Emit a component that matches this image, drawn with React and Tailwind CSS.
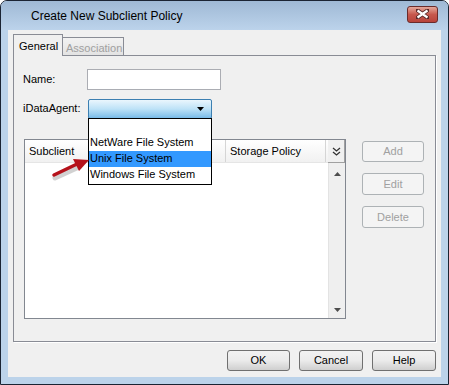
import React from 'react';

const FONT = { fontFamily: '"Liberation Sans", Arial, sans-serif' };

const WinButton = ({ label, disabled, className = '' }) => (
  <div
    className={`flex items-center justify-center rounded-[3px] border text-[11px] ${
      disabled
        ? 'border-[#adb2b5] bg-[#f4f4f4] text-[#a0a0a0]'
        : 'border-[#707070] bg-gradient-to-b from-[#f2f2f2] via-[#ebebeb] to-[#cfcfcf] text-black'
    } ${className}`}
  >
    {label}
  </div>
);

const TriUp = () => (
  <svg width="7" height="4" viewBox="0 0 7 4">
    <path d="M0 4 L3.5 0 L7 4 Z" fill="#4d4d4d" />
  </svg>
);

const TriDown = ({ color = '#4d4d4d' }) => (
  <svg width="7" height="4" viewBox="0 0 7 4">
    <path d="M0 0 L7 0 L3.5 4 Z" fill={color} />
  </svg>
);

const App = () => {
  return (
    <div
      className="relative flex h-[385px] w-[449px] flex-col overflow-hidden rounded-t-[7px] border border-[#1b2433] bg-[#bcd3ea]"
      style={FONT}
    >
      {/* Title bar */}
      <div className="flex h-[29px] shrink-0 items-center bg-gradient-to-b from-[#9fb9d5] to-[#bcd3eb] pl-[30px] pr-[10px]">
        <span className="flex-1 pt-px text-[12px] text-black">Create New Subclient Policy</span>
        <div className="mb-[3px] flex h-[17px] w-[31px] items-center justify-center rounded-[3px] border border-[#6a2b2b] bg-gradient-to-b from-[#e3a79b] via-[#c7584d] to-[#b8433b]">
          <svg width="13" height="10" viewBox="0 0 13 10">
            <path
              d="M1 1 L12 9 M12 1 L1 9"
              stroke="#5b2b2b"
              strokeWidth="4"
              strokeLinecap="square"
            />
            <path d="M1.5 1.5 L11.5 8.5 M11.5 1.5 L1.5 8.5" stroke="#ffffff" strokeWidth="2.2" />
          </svg>
        </div>
      </div>

      {/* Client area */}
      <div className="mx-[7px] flex h-[347px] flex-col bg-[#f0f0f0] px-[5px] pt-[4px]">
        {/* Tabs */}
        <div className="relative z-10 flex h-[22px] items-end">
          <div className="flex h-[22px] w-[50px] items-start border border-b-0 border-[#898c95] bg-[#f0f0f0] pl-[5px] pt-[3px] text-[11px] text-black">
            General
          </div>
          <div className="mb-px flex h-[18px] w-[61px] items-start border border-b-0 border-l-0 border-[#898c95] bg-gradient-to-b from-[#f2f2f2] to-[#e3e3e3] pl-[3px] pt-[2px] text-[11px] text-[#a0a0a0]">
            Association
          </div>
        </div>

        {/* Tab panel */}
        <div className="-mt-px h-[287px] w-[423px] border border-[#898c95] bg-[#f0f0f0] shadow-[1px_1px_0_#ffffff]">
          <div className="flex flex-col px-[9px] pt-[13px]">
            <div className="flex h-[20px] items-center">
              <span className="w-[64px] text-[11px] text-black">Name:</span>
              <div className="h-[21px] w-[134px] border border-[#abadb3] bg-white" />
            </div>

            <div className="mt-[10px] flex h-[19px] items-center">
              <span className="w-[65px] text-[11px] text-black">iDataAgent:</span>
              <div className="relative">
                <div className="flex h-[20px] w-[124px] items-center justify-end rounded-[2px] border border-[#3c7fb1] bg-gradient-to-b from-[#eaf6fd] via-[#bde2f7] to-[#79bbe8] pr-[7px]">
                  <TriDown color="#000000" />
                </div>
                {/* Open dropdown list */}
                <div className="absolute left-0 top-[19px] z-20 flex w-[124px] flex-col border border-black bg-white pb-px text-[11px] text-black">
                  <div className="h-[16px]" />
                  <div className="flex h-[16px] items-center pl-px">NetWare File System</div>
                  <div className="flex h-[16px] items-center bg-[#3399ff] pl-px">Unix File System</div>
                  <div className="flex h-[16px] items-center pl-px">Windows File System</div>
                </div>
              </div>
            </div>

            <div className="mt-[21px] flex">
              {/* List view */}
              <div className="ml-px flex h-[180px] w-[322px] border border-[#828790] bg-white">
                <div className="flex flex-1 flex-col">
                  <div className="flex h-[23px] items-center border-b border-[#e5e5e5] bg-gradient-to-b from-[#ffffff] to-[#f1f1f1] text-[11px] text-black">
                    <div className="flex h-full w-[201px] items-center border-r border-[#d5d5d5] pl-[4px]">Subclient</div>
                    <div className="flex h-full w-[100px] items-center border-r border-[#d5d5d5] pl-[4px]">Storage Policy</div>
                  </div>
                  <div className="flex-1 bg-white" />
                </div>
                <div className="flex w-[17px] flex-col">
                  <div className="flex h-[23px] items-center justify-center border-r border-b border-[#a0a0a0] bg-[#f0f0f0]">
                    <svg width="9" height="9" viewBox="0 0 9 9">
                      <path d="M1 1 L4.5 4 L8 1 M1 5 L4.5 8 L8 5" stroke="#333333" strokeWidth="1.3" fill="none" />
                    </svg>
                  </div>
                  <div className="flex flex-1 flex-col items-center justify-between border-l border-[#e3e3e3] bg-[#efefef] pb-[6px] pt-[9px]">
                    <TriUp />
                    <TriDown />
                  </div>
                </div>
              </div>

              {/* Side buttons */}
              <div className="ml-[16px] mt-[2px] flex flex-col gap-[11px]">
                <WinButton label="Add" disabled className="h-[21px] w-[62px]" />
                <WinButton label="Edit" disabled className="h-[22px] w-[62px]" />
                <WinButton label="Delete" disabled className="h-[22px] w-[62px]" />
              </div>
            </div>
          </div>
        </div>

        {/* Dialog buttons */}
        <div className="mt-[8px] flex w-[423px] justify-end gap-[9px]">
          <WinButton label="OK" className="h-[21px] w-[63px]" />
          <WinButton label="Cancel" className="h-[21px] w-[64px]" />
          <WinButton label="Help" className="h-[21px] w-[64px]" />
        </div>
      </div>

      {/* Red pointer arrow */}
      <svg className="absolute left-[48px] top-[155px] z-30" width="45" height="28" viewBox="0 0 45 28">
        <path d="M6 22 L30 11" stroke="#000000" strokeOpacity="0.18" strokeWidth="5" strokeLinecap="round" />
        <path d="M5 19 L28 8" stroke="#b5121b" strokeWidth="3.5" strokeLinecap="round" />
        <path d="M40 4 L24 3 L30 15 Z" fill="#b5121b" />
      </svg>
    </div>
  );
};

export default App;
